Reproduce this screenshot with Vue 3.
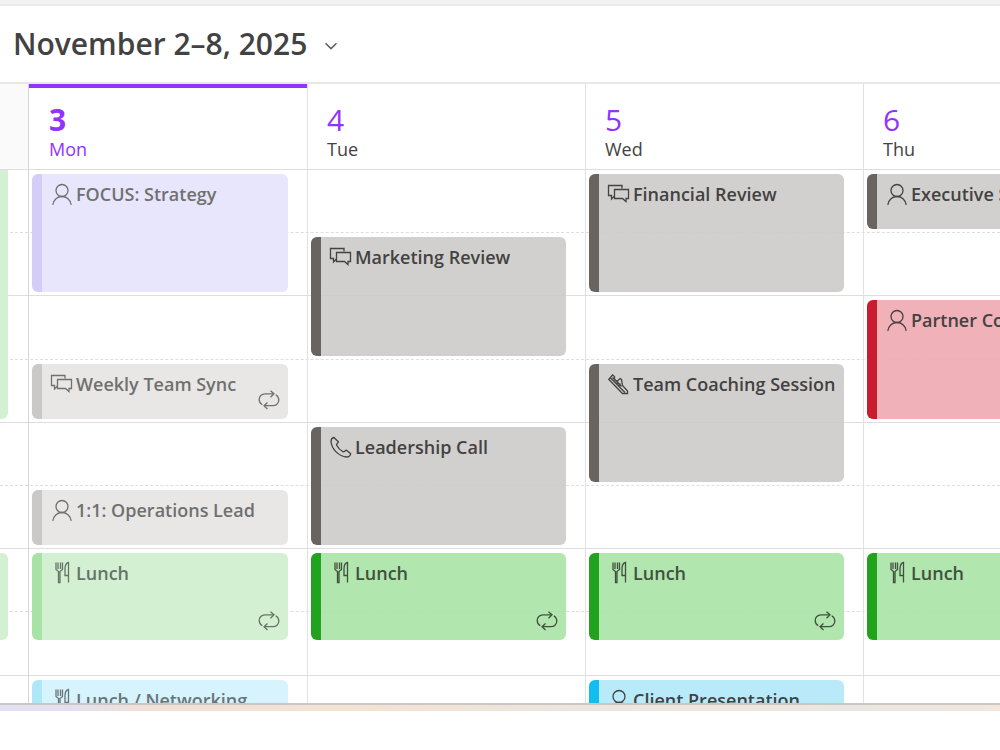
<template>
    <div class="page">
        <div class="topbar"></div>
        <!-- 标题栏 -->
        <header class="toolbar">
            <h1 class="range">
                <button class="range-btn">
                    <span>November 2–8, 2025</span>
                    <svg class="chevron" viewBox="0 0 14 8">
                        <path d="M1.500 1.200 7 6.600l5.500-5.400" />
                    </svg>
                </button>
            </h1>
        </header>
        <!-- 日期表头 -->
        <div class="days columns">
            <div v-for="day in days" :key="day.id" class="day" :class="day.state">
                <span class="num">{{ day.num }}</span>
                <span class="name">{{ day.name }}</span>
            </div>
        </div>
        <!-- 日程主体 -->
        <main class="body">
            <div class="slots">
                <div v-for="n in 10" :key="n" class="slot"></div>
            </div>
            <div class="columns tracks">
                <div v-for="day in days" :key="day.id" class="track" :class="day.state">
                    <button v-for="(item, i) in day.events" :key="i" class="event" :class="item.color"
                        :style="{ gridRow: item.row + ' / span ' + item.span }">
                        <svg v-if="item.icon" class="icon" viewBox="0 0 24 24">
                            <path v-for="d in icons[item.icon]" :key="d" :d="d" />
                        </svg>
                        <span class="title">{{ item.title }}</span>
                        <svg v-if="item.repeat" class="repeat" viewBox="0 0 22 20">
                            <path v-for="d in icons.repeat" :key="d" :d="d" />
                        </svg>
                    </button>
                </div>
            </div>
        </main>
        <div class="strip"></div>
    </div>
</template>

<script setup>
// 图标路径
const icons = {
    person: ['M12 2.5a6 6 0 0 1 0 12A6 6 0 0 1 12 2.500Z', 'M2.800 22.800c.8-4.900 4.600-8.300 9.200-8.300s8.400 3.400 9.200 8.300'],
    chat: ['M7.500 14 4.500 17V13.500H1.500V3.500H15V6.500', 'M7.500 7.500H21.500V16.500H19V19.500L15.500 16.500H7.500Z'],
    food: ['M6 1.500V8.500L8.500 10.500V21.500H10V10.500L12.500 8.500V1.500M8 1.500V8M10.500 1.500V8', 'M18.500 21.500V1.500C16 2 15 5 15 8V14.500H18.500'],
    phone: ['M5 2.500C3.500 2.800 2 4.500 2 6.500 2.500 14 10 21.500 17.500 22 19.500 22 21.300 20.500 21.700 18.800L17.500 15.200C16.200 15.500 15.500 17 14.300 16.900 11.500 15.500 9 13 7.500 10 7.500 8.800 9 8.200 9.300 6.800Z'],
    shoe: ['M1.800 7.500 5.500 3 7.500 4.500 7.500 7.500 10 9.500 13 6.500 14.500 7.500 15.500 13.500 20.500 19 20.500 21.500 15.500 21.500Z', 'M3.500 6 18 20.500M5.500 5.500 14.500 14.500M9.500 12 11.500 10M11.500 14 13.500 11.500'],
    repeat: ['M15 3.800H7C3.500 3.800 1.200 6.500 1.200 9.500 1.200 12 2.300 13.600 4.300 14.700', 'M12.500 .8 16 3.800 12.500 7.200', 'M7 15.700H15C18.500 15.700 20.800 13 20.800 10 20.800 7.500 19.700 5.900 17.700 4.800', 'M9.500 12.500 6 15.700 9.500 19']
}

// row 以 15 分钟为单位
const days = [
    {
        id: 'sun', num: '', name: '', state: 'weekend',
        events: [
            { row: 1, span: 8, color: 'green-past open', title: '' },
            { row: 13, span: 3, color: 'green-past', title: '', repeat: true }
        ]
    },
    {
        id: 'mon', num: '3', name: 'Mon', state: 'today',
        events: [
            { row: 1, span: 4, color: 'violet', icon: 'person', title: 'FOCUS: Strategy' },
            { row: 7, span: 2, color: 'gray-past', icon: 'chat', title: 'Weekly Team Sync', repeat: true },
            { row: 11, span: 2, color: 'gray-past', icon: 'person', title: '1:1: Operations Lead' },
            { row: 13, span: 3, color: 'green-past', icon: 'food', title: 'Lunch', repeat: true },
            { row: 17, span: 3, color: 'blue-past', icon: 'food', title: 'Lunch / Networking' }
        ]
    },
    {
        id: 'tue', num: '4', name: 'Tue', state: '',
        events: [
            { row: 3, span: 4, color: 'gray', icon: 'chat', title: 'Marketing Review' },
            { row: 9, span: 4, color: 'gray', icon: 'phone', title: 'Leadership Call' },
            { row: 13, span: 3, color: 'green', icon: 'food', title: 'Lunch', repeat: true }
        ]
    },
    {
        id: 'wed', num: '5', name: 'Wed', state: '',
        events: [
            { row: 1, span: 4, color: 'gray', icon: 'chat', title: 'Financial Review' },
            { row: 7, span: 4, color: 'gray', icon: 'shoe', title: 'Team Coaching Session' },
            { row: 13, span: 3, color: 'green', icon: 'food', title: 'Lunch', repeat: true },
            { row: 17, span: 4, color: 'blue', icon: 'person', title: 'Client Presentation' }
        ]
    },
    {
        id: 'thu', num: '6', name: 'Thu', state: 'cut',
        events: [
            { row: 1, span: 2, color: 'gray', icon: 'person', title: 'Executive S' },
            { row: 5, span: 4, color: 'red', icon: 'person', title: 'Partner Co' },
            { row: 13, span: 3, color: 'green', icon: 'food', title: 'Lunch' }
        ]
    }
]
</script>

<style>
body {
    margin: 0;
    background: #fff;
}
</style>

<style scoped>
.page {
    display: flex;
    flex-direction: column;
    box-sizing: border-box;
    height: 100vh;
    padding-bottom: 39px;
    font-family: "Open Sans", "Noto Sans", sans-serif;
    color: #424242;
    overflow: hidden;
}

.topbar {
    height: 4px;
    background: #f2f2f2;
    border-bottom: 2px solid #ebebeb;
}

.toolbar {
    display: flex;
    align-items: center;
    height: 76px;
    padding-left: 13px;
    border-bottom: 2px solid #e8e8e8;
}

.range {
    margin: 0;
    font-size: 30px;
    line-height: 40px;
}

.range-btn {
    display: flex;
    align-items: center;
    gap: 17px;
    padding: 0;
    border: 0;
    background: none;
    font: inherit;
    font-weight: 600;
    color: inherit;
}

.chevron {
    width: 14px;
    height: 8px;
    margin-top: 4px;
    fill: none;
    stroke: #616161;
    stroke-width: 1.6;
}

.columns {
    display: grid;
    grid-template-columns: 29px repeat(3, 278fr) 137fr;
}

.day {
    display: flex;
    flex-direction: column;
    box-sizing: border-box;
    height: 85px;
    padding: 19px 0 0 19px;
    border-left: 1px solid #e1e1e1;
}

.day.weekend {
    padding: 0;
    border-left: 0;
    border-right: 1px solid #d6d6d6;
    background: #fafafa;
}

.day.today {
    padding: 15px 0 0 20px;
    border-left: 0;
    border-top: 4px solid #9333ff;
    color: #9333ff;
}

.num {
    font-size: 30px;
    line-height: 34px;
    color: #9333ff;
}

.today .num {
    font-weight: 700;
}

.name {
    font-size: 18px;
    line-height: 24px;
}

.body {
    display: grid;
    flex: 1;
    min-height: 0;
    overflow: hidden;
}

/* 网格线与日程叠放在同一单元格 */
.slots,
.tracks {
    grid-area: 1 / 1;
    height: 632px;
}

.slots {
    display: grid;
    grid-template-rows: repeat(10, 1fr);
}

.slot {
    border-top: 1px solid #dedede;
}

.slot:nth-child(even) {
    border-top: 1px dashed #dedede;
}

.track {
    display: grid;
    grid-template-rows: repeat(20, minmax(0, 1fr));
    min-width: 0;
    border-left: 1px solid #e1e1e1;
    overflow: hidden;
}

/* 周日只露出右侧边缘 */
.track.weekend {
    grid-template-columns: 278px;
    justify-content: end;
    border-left: 0;
    border-right: 1px solid #d6d6d6;
}

.track.today {
    border-left: 0;
}

.event {
    display: flex;
    align-items: flex-start;
    min-width: 0;
    margin: 5px 19px 3px 3px;
    padding: 7px 8px 9px 8px;
    border: 0;
    border-left: 10px solid;
    border-radius: 6px;
    font-family: inherit;
    font-size: 18px;
    font-weight: 600;
    line-height: 26px;
    color: #424242;
    text-align: left;
    white-space: nowrap;
    overflow: hidden;
}

.weekend .event {
    margin-right: 20px;
}

.cut .event {
    margin-right: 0;
    padding-right: 0;
    border-top-right-radius: 0;
    border-bottom-right-radius: 0;
}

.event.open {
    margin-top: 1px;
    border-top-right-radius: 0;
}

.icon {
    flex: none;
    width: 24px;
    height: 24px;
    margin: 1px 2px 0 0;
}

.icon,
.repeat {
    fill: none;
    stroke: currentColor;
    stroke-width: 1.3;
}

.repeat {
    flex: none;
    align-self: flex-end;
    width: 22px;
    height: 20px;
    margin-left: auto;
}

.violet {
    border-color: #d3cdf7;
    background: #e8e6fc;
    color: #707070;
}

.gray-past {
    border-color: #cac9c8;
    background: #e8e7e6;
    color: #707070;
}

.green-past {
    border-color: #a6e3a4;
    background: #d3f0d2;
    color: #66736a;
}

.blue-past {
    border-color: #aee7fa;
    background: #d7f3fd;
    color: #68757a;
}

.gray {
    border-color: #69645f;
    background: rgba(205, 203, 201, 0.9);
}

.green {
    border-color: #22a31e;
    background: rgba(168, 227, 165, 0.9);
    color: #41503f;
}

.blue {
    border-color: #14bdf0;
    background: #b8eafa;
}

.red {
    border-color: #c71d2e;
    background: rgba(239, 169, 176, 0.9);
}

.strip {
    height: 6px;
    border-top: 2px solid #cbc5c3;
    background: linear-gradient(90deg, #e2e0f4 0, #e4dff0 7%, #f0e1d8 14%, #f2e3d2 35%, #ece5e0 60%, #f1e6dc 72%, #ebe6e2 85%, #f2e6dd 100%);
}
</style>
